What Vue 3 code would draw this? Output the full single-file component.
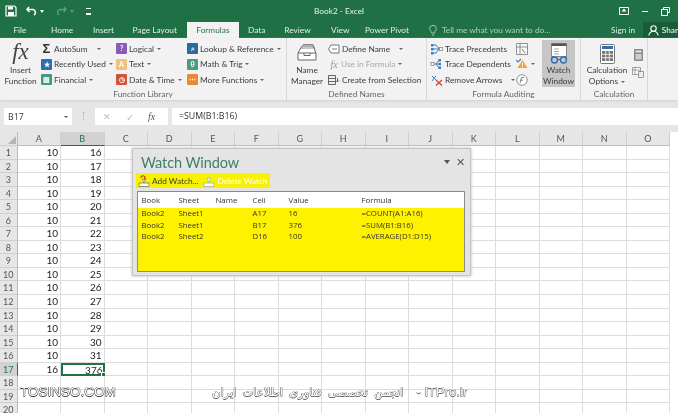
<script setup>
const tabs = [
  { name: 'File', cls: 't-file' },
  { name: 'Home', cls: 't-home' },
  { name: 'Insert', cls: 't-insert' },
  { name: 'Page Layout', cls: 't-page' },
  { name: 'Formulas', cls: 't-formulas active' },
  { name: 'Data', cls: 't-data' },
  { name: 'Review', cls: 't-review' },
  { name: 'View', cls: 't-view' },
  { name: 'Power Pivot', cls: 't-pivot' }
]

// function library, one list per column
const libCol1 = [
  { text: 'Recently Used', color: 'blue', glyph: '★', caret: true },
  { text: 'Financial', color: 'teal', glyph: '▤', caret: true }
]
const libCol2 = [
  { text: 'Logical', color: 'purple', glyph: '?', caret: true },
  { text: 'Text', color: 'sand', glyph: 'A', caret: true },
  { text: 'Date & Time', color: 'red', glyph: '◷', caret: true }
]
const libCol3 = [
  { text: 'Lookup & Reference', color: 'navy', glyph: '⌕', caret: true },
  { text: 'Math & Trig', color: 'green', glyph: 'θ', caret: true },
  { text: 'More Functions', color: 'orange', glyph: '⋯', caret: true }
]

const columns = ['A', 'B', 'C', 'D', 'E', 'F', 'G', 'H', 'I', 'J', 'K', 'L', 'M', 'N', 'O']
const rowNums = Array.from({ length: 20 }, (_, i) => i + 1)

function cellA(n) {
  if (n < 17) return 10
  if (n === 17) return 16
  return ''
}
function cellB(n) {
  if (n < 17) return 15 + n
  if (n === 17) return 376
  return ''
}

const watches = [
  { book: 'Book2', sheet: 'Sheet1', name: '', cell: 'A17', value: '16', formula: '=COUNT(A1:A16)' },
  { book: 'Book2', sheet: 'Sheet1', name: '', cell: 'B17', value: '376', formula: '=SUM(B1:B16)' },
  { book: 'Book2', sheet: 'Sheet2', name: '', cell: 'D16', value: '100', formula: '=AVERAGE(D1:D15)' }
]
</script>

<template>
  <div class="excel">
    <!-- title bar -->
    <div class="titlebar">
      <div class="qat">
        <svg class="save" width="12" height="12" viewBox="0 0 12 12">
          <path d="M1 1h8.500L11 2.500V11H1z" fill="none" stroke="#fff" stroke-width="1.200" />
          <path d="M3 1.500h5v3H3zM3 7h6v4H3z" fill="#fff" />
        </svg>
        <svg class="undo" width="11" height="10" viewBox="0 0 11 10">
          <path d="M3 1L1 3.500 3.500 6M1.500 3.500H7a3 3 0 0 1 1 5.500" fill="none" stroke="#fff" stroke-width="1.500" />
        </svg>
        <span class="mini-caret"></span>
        <svg class="redo" width="11" height="10" viewBox="0 0 11 10">
          <path d="M8 1l2 2.500L7.500 6M9.500 3.500H4a3 3 0 0 0-1 5.500" fill="none" stroke="#5f9c7c" stroke-width="1.300" />
        </svg>
        <span class="mini-caret faded"></span>
        <span class="custom-qat"></span>
      </div>
      <div class="doc-title">Book2 - Excel</div>
      <div class="win-btns">
        <svg width="10" height="8" viewBox="0 0 10 8">
          <path d="M.5.500h9v7h-9z" fill="none" stroke="#fff" />
          <path d="M5 1.500L7.500 4.500h-5z" fill="#fff" />
        </svg>
        <span class="minimize"></span>
        <svg width="9" height="9" viewBox="0 0 9 9">
          <path d="M2.500 2V.5h6v5H7M.5 2.500h6v6h-6z" fill="none" stroke="#fff" />
        </svg>
      </div>
    </div>

    <!-- tabs -->
    <div class="tabbar">
      <div v-for="t in tabs" :key="t.name" class="tab" :class="t.cls">{{ t.name }}</div>
      <div class="tellme">
        <svg width="8" height="11" viewBox="0 0 8 11">
          <path d="M2.500 8C2.500 6 .6 5.600.6 3.500a3.400 3.100 0 0 1 6.800 0C7.400 5.600 5.500 6 5.500 8zM2.800 10h2.400" fill="none" stroke="#a9d1ba" stroke-width=".9" />
        </svg>
        <span>Tell me what you want to do...</span>
      </div>
      <div class="signin">Sign in</div>
      <div class="share">
        <svg width="11" height="11" viewBox="0 0 11 11">
          <circle cx="5.500" cy="3.500" r="2.700" fill="none" stroke="#fff" stroke-width="1.100" />
          <path d="M.8 10.500c.5-3 2.500-4.300 4.700-4.300s4.200 1.300 4.700 4.300" fill="none" stroke="#fff" stroke-width="1.100" />
        </svg>
        <span>Shar</span>
      </div>
    </div>

    <!-- ribbon -->
    <div class="ribbon">
      <div class="group g-lib">
        <div class="group-body">
          <div class="big fx-btn">
            <div class="fx-big">fx</div>
            <div class="big-label">Insert<br />Function</div>
          </div>
          <div class="col c1">
            <div class="item">
              <span class="sigma">Σ</span><span>AutoSum</span><span class="caret wide"></span>
            </div>
            <div v-for="it in libCol1" :key="it.text" class="item">
              <span class="tile" :class="it.color">{{ it.glyph }}</span><span>{{ it.text }}</span><span class="caret"></span>
            </div>
          </div>
          <div class="col c2">
            <div v-for="it in libCol2" :key="it.text" class="item">
              <span class="tile" :class="it.color">{{ it.glyph }}</span><span>{{ it.text }}</span><span class="caret"></span>
            </div>
          </div>
          <div class="col c3">
            <div v-for="it in libCol3" :key="it.text" class="item">
              <span class="tile" :class="it.color">{{ it.glyph }}</span><span>{{ it.text }}</span><span class="caret"></span>
            </div>
          </div>
        </div>
        <div class="group-label">Function Library</div>
      </div>

      <div class="group g-names">
        <div class="group-body">
          <div class="big name-btn">
            <svg class="big-icon" width="22" height="22" viewBox="0 0 22 22">
              <path d="M2 11l4-7h11l3 7v7H2z" fill="#fff" stroke="#666" />
              <path d="M7 2.500h10l2 5M5 6h12" fill="none" stroke="#888" />
              <path d="M2 11h18" stroke="#666" />
              <path d="M8 11v2.500h6V11" fill="none" stroke="#666" />
            </svg>
            <div class="big-label">Name<br />Manager</div>
          </div>
          <div class="col c-names">
            <div class="item">
              <svg class="small-svg" width="12" height="10" viewBox="0 0 12 10">
                <path d="M3 1h8v8H3L.5 5z" fill="#fff" stroke="#777" />
                <path d="M4 5h5" stroke="#777" />
              </svg>
              <span>Define Name</span><span class="caret wide"></span>
            </div>
            <div class="item disabled">
              <span class="fx-small">fx</span><span>Use in Formula</span><span class="caret"></span>
            </div>
            <div class="item">
              <svg class="small-svg" width="12" height="10" viewBox="0 0 12 10">
                <path d="M.5.500h7v9h-7zM.5 3.500h7M.5 6.500h7M9.500 3v4M8 5.500l1.500 1.500L11 5.500" fill="none" stroke="#666" />
              </svg>
              <span>Create from Selection</span>
            </div>
          </div>
        </div>
        <div class="group-label">Defined Names</div>
      </div>

      <div class="group g-audit">
        <div class="group-body">
          <div class="col c-audit">
            <div class="item">
              <svg class="small-svg" width="13" height="12" viewBox="0 0 13 12">
                <path d="M3 2h3l3 4M3 6h6M3 10h3l3-4" fill="none" stroke="#3f7fbf" />
                <rect x="1" y="1" width="2.500" height="2.500" fill="#3f7fbf" />
                <rect x="1" y="5" width="2.500" height="2.500" fill="#3f7fbf" />
                <rect x="1" y="9" width="2.500" height="2.500" fill="#3f7fbf" />
                <rect x="9.500" y="4.500" width="3" height="3" fill="#fff" stroke="#777" stroke-width=".7" />
              </svg>
              <span>Trace Precedents</span>
            </div>
            <div class="item">
              <svg class="small-svg" width="13" height="12" viewBox="0 0 13 12">
                <path d="M4 6h5M9 2L6 6l3 4" fill="none" stroke="#3f7fbf" />
                <rect x="1" y="4.500" width="3" height="3" fill="#fff" stroke="#777" stroke-width=".7" />
                <rect x="8.500" y="1" width="2.500" height="2.500" fill="#3f7fbf" />
                <rect x="8.500" y="4.800" width="2.500" height="2.500" fill="#3f7fbf" />
                <rect x="8.500" y="8.500" width="2.500" height="2.500" fill="#3f7fbf" />
              </svg>
              <span>Trace Dependents</span>
            </div>
            <div class="item">
              <svg class="small-svg" width="13" height="12" viewBox="0 0 13 12">
                <path d="M2 2l5 5M6 2L2 7" fill="none" stroke="#3f7fbf" />
                <path d="M6 6l6 5.500M12 6l-6 5.500" fill="none" stroke="#d24726" stroke-width="1.300" />
              </svg>
              <span>Remove Arrows</span><span class="caret wide2"></span>
            </div>
          </div>
          <div class="col c-audit2">
            <div class="item">
              <svg width="12" height="12" viewBox="0 0 12 12">
                <path d="M.5.500h11v11H.5zM.5 4h11M4 .5v11" fill="#f8f8f8" stroke="#777" stroke-width=".8" />
                <path d="M6 6l3 4" stroke="#777" />
              </svg>
            </div>
            <div class="item">
              <svg width="12" height="12" viewBox="0 0 12 12">
                <path d="M0 2l2 2 3-3" fill="none" stroke="#3f7fbf" stroke-width="1.200" />
                <path d="M6.500 2L11.500 10H1.500z" fill="#f2a33a" />
                <path d="M6.500 4.500v3M6.500 8.300v1" stroke="#fff" />
              </svg>
              <span class="caret"></span>
            </div>
            <div class="item">
              <svg width="12" height="12" viewBox="0 0 12 12">
                <circle cx="6" cy="6" r="5.300" fill="#fff" stroke="#777" stroke-width=".8" />
                <path d="M4 9l1.500-5.500H8M4.500 6.200h2.500" fill="none" stroke="#666" stroke-width=".8" />
              </svg>
            </div>
          </div>
          <div class="big watch-btn">
            <svg class="big-icon" width="20" height="21" viewBox="0 0 20 21">
              <path d="M2.500.5h15v13h-15z" fill="#fff" stroke="#888" />
              <path d="M2.500.5h15V3h-15z" fill="#555" />
              <path d="M5 6h5M5 8.500h5M5 11h5" stroke="#aaa" />
              <circle cx="5.500" cy="17" r="3" fill="none" stroke="#2f6fb5" stroke-width="1.400" />
              <circle cx="14.500" cy="17" r="3" fill="none" stroke="#2f6fb5" stroke-width="1.400" />
              <path d="M8.500 16.500h3M2.500 16L3.500 13M17.500 16l-1-3" fill="none" stroke="#2f6fb5" stroke-width="1.200" />
            </svg>
            <div class="big-label">Watch<br />Window</div>
          </div>
        </div>
        <div class="group-label">Formula Auditing</div>
      </div>

      <div class="group g-calc">
        <div class="group-body">
          <div class="big calc-btn">
            <svg class="big-icon" width="15" height="20" viewBox="0 0 15 20">
              <rect x=".5" y=".5" width="14" height="19" rx="1" fill="#fff" stroke="#777" />
              <rect x="2" y="2" width="11" height="3" fill="#2f6fb5" />
              <path d="M2 7h11v10H2z" fill="#777" />
              <path d="M5.700 7v10M9.300 7v10M2 10.300h11M2 13.700h11" stroke="#fff" stroke-width=".8" />
            </svg>
            <div class="big-label">Calculation<br />Options <span class="caret inline"></span></div>
          </div>
          <div class="col c-calc">
            <svg width="9" height="12" viewBox="0 0 9 12">
              <rect width="9" height="12" rx="1" fill="#8a8a8a" />
              <rect x="1.500" y="1.500" width="6" height="2" fill="#dfe8f0" />
              <path d="M1.500 5h6v5.500h-6z" fill="#cfcfcf" />
            </svg>
            <svg width="12" height="11" viewBox="0 0 12 11">
              <path d="M.5.500h8v7h-8zM.5 3h8M3 .5v7" fill="#fff" stroke="#888" stroke-width=".8" />
              <rect x="6.500" y="4.500" width="5" height="6" fill="#e8eef4" stroke="#888" stroke-width=".8" />
            </svg>
          </div>
        </div>
        <div class="group-label">Calculation</div>
      </div>
    </div>

    <!-- formula bar -->
    <div class="formulabar">
      <div class="namebox">
        <span>B17</span>
        <span class="caret dark"></span>
      </div>
      <div class="dots"></div>
      <div class="fx-box">
        <span class="fb-x">✕</span>
        <span class="fb-check">✓</span>
        <span class="fb-fx">fx</span>
      </div>
      <div class="fx-input">=SUM(B1:B16)</div>
    </div>

    <!-- sheet -->
    <div class="sheet">
      <div class="sheet-row head">
        <div class="corner"><span class="tri"></span></div>
        <div v-for="c in columns" :key="c" class="col-head" :class="{ sel: c === 'B' }">{{ c }}</div>
      </div>
      <div v-for="n in rowNums" :key="n" class="sheet-row">
        <div class="row-head" :class="{ sel: n === 17 }">{{ n }}</div>
        <div v-for="c in columns" :key="c" class="cell" :class="{ current: c === 'B' && n === 17 }">
          <template v-if="c === 'A'">{{ cellA(n) }}</template>
          <template v-else-if="c === 'B'">{{ cellB(n) }}</template>
        </div>
      </div>
    </div>

    <!-- watch window floats over the sheet -->
    <div class="watch">
      <div class="watch-head">
        <span class="watch-title">Watch Window</span>
        <span class="watch-ctrl"><span class="caret win"></span><span class="watch-close">✕</span></span>
      </div>
      <div class="watch-tools">
        <div class="tool">
          <svg width="12" height="12" viewBox="0 0 12 12">
            <path d="M1 8h10v3.500H1z" fill="#fff" stroke="#777" stroke-width=".8" />
            <path d="M6 8L4 4h4z" fill="#ddd" stroke="#777" stroke-width=".6" />
            <path d="M3 3a2 2 0 1 1 3 1.500" fill="none" stroke="#c0392b" stroke-width="1.200" />
          </svg>
          <span>Add Watch...</span>
        </div>
        <div class="tool off">
          <svg width="12" height="12" viewBox="0 0 12 12">
            <path d="M1 8h10v3.500H1z" fill="#fff" stroke="#aaa" stroke-width=".8" />
            <path d="M6 8L4 3h4z" fill="#eee" stroke="#aaa" stroke-width=".6" />
          </svg>
          <span>Delete Watch</span>
        </div>
      </div>
      <div class="watch-table">
        <div class="w-row w-head">
          <span>Book</span><span>Sheet</span><span>Name</span><span>Cell</span><span>Value</span><span>Formula</span>
        </div>
        <div class="w-body">
          <div v-for="w in watches" :key="w.cell" class="w-row">
            <span>{{ w.book }}</span><span>{{ w.sheet }}</span><span>{{ w.name }}</span><span>{{ w.cell }}</span><span>{{ w.value }}</span><span>{{ w.formula }}</span>
          </div>
        </div>
      </div>
    </div>

    <!-- video watermarks -->
    <div class="mark mark-left">TOSINSO.COM</div>
    <div class="mark mark-mid">
      <span class="mark-fa" dir="rtl">انجمن تخصصی فناوری اطلاعات ایران</span>
      <span class="mark-en">- ITPro.ir</span>
    </div>
  </div>
</template>

<style scoped>
.excel {
  position: relative;
  width: 678px;
  height: 413px;
  overflow: hidden;
  background: #fff;
  color: #3c3c3c;
  font-family: Lato, "Liberation Sans", sans-serif;
  font-size: 8.300px;
  filter: blur(0.3px);
}

/* title bar */
.titlebar {
  height: 22px;
  background: #1f7045;
  color: #e8f2ec;
  display: flex;
  align-items: center;
  justify-content: space-between;
  position: relative;
}
.qat {
  display: flex;
  align-items: center;
  padding-left: 5px;
}
.undo { margin-left: 9px; }
.mini-caret {
  width: 0;
  height: 0;
  margin: 0 0 0 3px;
  border: 2px solid transparent;
  border-top: 3px solid #fff;
  border-bottom: 0;
}
.mini-caret.faded { border-top-color: #5f9c7c; }
.redo { margin-left: 12px; }
.custom-qat {
  width: 5px;
  height: 4px;
  margin-left: 12px;
  border-top: 1px solid #fff;
  border-bottom: 2px solid #fff;
}
.doc-title {
  position: absolute;
  left: 0;
  right: 0;
  text-align: center;
}
.win-btns {
  display: flex;
  align-items: center;
  gap: 13px;
  padding-right: 8px;
}
.minimize {
  width: 6px;
  height: 1px;
  background: #fff;
}

/* tabs */
.tabbar {
  height: 16px;
  background: #1f7045;
  display: flex;
  align-items: stretch;
  color: #e3efe8;
  line-height: 17px;
}
.tab { text-align: center; }
.t-file { width: 40px; }
.t-home { width: 45px; }
.t-insert { width: 38px; }
.t-page { width: 65px; }
.t-formulas { width: 52px; }
.t-data { width: 36px; }
.t-review { width: 46px; }
.t-view { width: 40px; }
.t-pivot { width: 54px; }
.tab.active {
  background: #f2f2f2;
  color: #2b6f4a;
}
.tellme {
  margin-left: 15px;
  width: 183px;
  display: flex;
  align-items: center;
  gap: 5px;
  color: #a9d1ba;
}
.signin { width: 32px; }
.share {
  flex: 1;
  background: #185c38;
  display: flex;
  align-items: center;
  gap: 3px;
  padding-left: 5px;
  color: #fff;
}

/* ribbon */
.ribbon {
  height: 62px;
  background: #f2f2f2;
  display: flex;
  box-shadow: 0 1px 2px #d0d0d0;
  position: relative;
}
.group {
  display: flex;
  flex-direction: column;
  border-right: 1px solid #d8d8d8;
}
.g-lib { width: 286px; }
.g-names { width: 139px; }
.g-audit { width: 153px; }
.g-calc { width: 66px; }
.group-body {
  flex: 1;
  display: flex;
  padding-top: 2px;
  min-height: 0;
}
.group-label {
  text-align: center;
  line-height: 11px;
  color: #666;
}
.big {
  display: flex;
  flex-direction: column;
  align-items: center;
  text-align: center;
  line-height: 11px;
}
.big-label { margin-top: 1px; }
.fx-btn { width: 35px; margin-left: 3px; }
.fx-big {
  font-family: "Liberation Serif", serif;
  font-style: italic;
  font-size: 23px;
  line-height: 24px;
  color: #444;
}
.col {
  display: flex;
  flex-direction: column;
  justify-content: flex-start;
  padding-top: 1px;
}
.item {
  display: flex;
  align-items: center;
  height: 15.500px;
  white-space: nowrap;
}
.c1 { width: 75px; margin-left: 3px; }
.c2 { width: 71px; }
.c3 { width: 98px; }
.tile {
  width: 11px;
  height: 11px;
  margin-right: 2px;
  flex: none;
  color: #fff;
  font-size: 7px;
  line-height: 11px;
  text-align: center;
  font-weight: 700;
  border-radius: 1px;
}
.blue { background: #2b6fb3; }
.teal { background: #3f9a84; }
.purple { background: #8a5bb5; }
.sand { background: #f0c27a; }
.red { background: #d2553a; }
.navy { background: #2a6a9e; }
.green { background: #4f9a7d; }
.orange { background: #ea8a2e; }
.sigma {
  width: 11px;
  margin-right: 2px;
  font-size: 13px;
  font-weight: 700;
  line-height: 11px;
  text-align: center;
  color: #333;
  font-family: "Liberation Sans", sans-serif;
}
.caret {
  display: inline-block;
  width: 0;
  height: 0;
  margin-left: 3px;
  border: 2px solid transparent;
  border-top: 2.500px solid #666;
  border-bottom: 0;
  vertical-align: middle;
}
.caret.wide { margin-left: 9px; }
.caret.wide2 { margin-left: 9px; }
.caret.inline { margin-left: 1px; }
.caret.dark { border-top-color: #555; }
.caret.win {
  border-width: 3px;
  border-top: 4px solid #555;
  border-bottom: 0;
}

.name-btn { width: 38px; margin-left: 1px; }
.big-icon { margin: 2px 0 0; flex: none; }
.c-names { width: 96px; margin-left: 2px; }
.small-svg { margin-right: 2px; flex: none; }
.disabled { color: #aaa; }
.fx-small {
  width: 12px;
  margin-right: 1px;
  font-family: "Liberation Serif", serif;
  font-style: italic;
  font-size: 10px;
  text-align: center;
  color: #999;
}
.c-audit { width: 86px; margin-left: 3px; }
.c-audit2 { width: 26px; }
.watch-btn {
  width: 33px;
  height: 47px;
  background: #c6c6c6;
}
.watch-btn .big-icon { margin: 3px 0 0; }
.calc-btn { width: 48px; margin-left: 2px; }
.calc-btn .big-icon { margin-top: 4px; }
.c-calc {
  padding-top: 9px;
  gap: 6px;
  align-items: center;
  width: 14px;
}

/* formula bar */
.formulabar {
  height: 32px;
  background: #e6e6e6;
  display: flex;
  align-items: flex-start;
  padding-top: 8px;
  box-sizing: border-box;
  font-family: "Open Sans", sans-serif;
  font-size: 8.800px;
}
.namebox {
  width: 68px;
  height: 17px;
  margin-left: 4px;
  padding: 0 4px;
  box-sizing: border-box;
  background: #fff;
  display: flex;
  align-items: center;
  justify-content: space-between;
}
.dots {
  width: 1px;
  height: 8px;
  margin: 4px 10px 0 11px;
  border-left: 1px dotted #aaa;
}
.fx-box {
  width: 73px;
  height: 17px;
  background: #fff;
  position: relative;
  display: flex;
  align-items: center;
}
.fb-x { margin-left: 8px; color: #bbb; font-size: 9px; }
.fb-check { margin-left: 15px; color: #bbb; font-size: 10px; }
.fb-fx {
  margin-left: 14px;
  font-family: "Liberation Serif", serif;
  font-style: italic;
  font-size: 10px;
  color: #555;
}
.fx-input {
  flex: 1;
  height: 17px;
  margin-left: 4px;
  padding-left: 7px;
  background: #fff;
  color: #333;
  line-height: 17px;
}

/* sheet */
.sheet {
  font-size: 10px;
  color: #222;
}
.sheet-row {
  display: flex;
  height: 13.550px;
}
.sheet-row.head { height: 14px; }
.corner,
.row-head {
  width: 17.500px;
  flex: none;
  background: #e6e6e6;
  box-sizing: border-box;
  border-right: 1px solid #bdbdbd;
  border-bottom: 1px solid #cfcfcf;
  text-align: center;
  color: #555;
  line-height: 13px;
  font-size: 9px;
}
.corner { position: relative; }
.tri {
  position: absolute;
  right: 1px;
  bottom: 1px;
  width: 0;
  height: 0;
  border-left: 8px solid transparent;
  border-bottom: 8px solid #b5b5b5;
}
.row-head.sel {
  background: #d2d2d2;
  border-right: 1.500px solid #217346;
  color: #217346;
}
.col-head {
  width: 43.500px;
  flex: none;
  background: #e6e6e6;
  box-sizing: border-box;
  border-right: 1px solid #cfcfcf;
  border-bottom: 1px solid #bdbdbd;
  text-align: center;
  color: #555;
  line-height: 13px;
  font-size: 9px;
}
.col-head.sel {
  background: #d2d2d2;
  border-bottom: 1.500px solid #217346;
  color: #217346;
}
.cell {
  width: 43.500px;
  flex: none;
  box-sizing: border-box;
  border-right: 1px solid #dcdcdc;
  border-bottom: 1px solid #dcdcdc;
  text-align: right;
  padding-right: 2px;
  line-height: 13px;
  position: relative;
}
.cell.current {
  border: 2px solid #217346;
  padding-right: 0;
  line-height: 10px;
}
.cell.current::after {
  content: "";
  position: absolute;
  right: -3px;
  bottom: -3px;
  width: 5px;
  height: 5px;
  background: #217346;
  border: 1px solid #fff;
  box-sizing: border-box;
}

/* watch window */
.watch {
  position: absolute;
  left: 132px;
  top: 148px;
  width: 339px;
  height: 128px;
  box-sizing: border-box;
  background: #e4e4e4;
  border: 1px solid #c4c4c4;
  box-shadow: 0 0 3px #bbb;
  padding: 0 5px 0 4px;
}
.watch-head {
  height: 24px;
  display: flex;
  justify-content: space-between;
  align-items: flex-end;
  padding-left: 4px;
}
.watch-title {
  font-size: 14.500px;
  letter-spacing: -.1px;
  line-height: 20px;
  color: #3e8069;
}
.watch-ctrl {
  display: flex;
  align-items: center;
  gap: 6px;
  padding-right: 0;
  margin-bottom: 5px;
  color: #555;
}
.watch-close { font-size: 11px; line-height: 12px; }
.watch-tools {
  width: 134px;
  height: 15px;
  margin-left: -1px;
  background: #f8f200;
  display: flex;
  align-items: center;
  padding-left: 2px;
  box-sizing: border-box;
  gap: 5px;
}
.tool {
  display: flex;
  align-items: center;
  gap: 2px;
  white-space: nowrap;
}
.tool.off { color: #fff; }
.watch-table {
  height: 81px;
  margin-top: 3px;
  border: 1px solid #8a8a8a;
  box-sizing: border-box;
  display: flex;
  flex-direction: column;
  background: #fff;
  font-family: "Open Sans", sans-serif;
  font-size: 7.800px;
  color: #333;
}
.w-row {
  display: grid;
  grid-template-columns: 37px 37px 37px 36px 73px 1fr;
  padding-left: 3.500px;
  height: 11.500px;
  line-height: 11.500px;
}
.w-head {
  height: 16px;
  line-height: 16px;
  flex: none;
}
.w-body {
  flex: 1;
  background: #fff200;
}

/* watermarks */
.mark {
  position: absolute;
  top: 384px;
  white-space: nowrap;
  pointer-events: none;
}
.mark-left {
  left: 20px;
  font-family: "Liberation Sans", sans-serif;
  font-size: 13.500px;
  color: #fff;
  text-shadow: -.5px 0 #444, .5px 0 #444, 0 -.5px #444, 0 .5px #444;
}
.mark-mid {
  left: 212px;
  width: 255px;
  display: flex;
  justify-content: space-between;
  align-items: center;
  color: #fff;
  text-shadow: -.5px 0 #666, .5px 0 #666, 0 -.5px #666, 0 .5px #666;
}
.mark-fa {
  font-family: "DejaVu Sans", sans-serif;
  font-size: 11.500px;
  word-spacing: 2.500px;
}
.mark-en {
  font-family: "Liberation Sans", sans-serif;
  font-size: 13px;
}
</style>
